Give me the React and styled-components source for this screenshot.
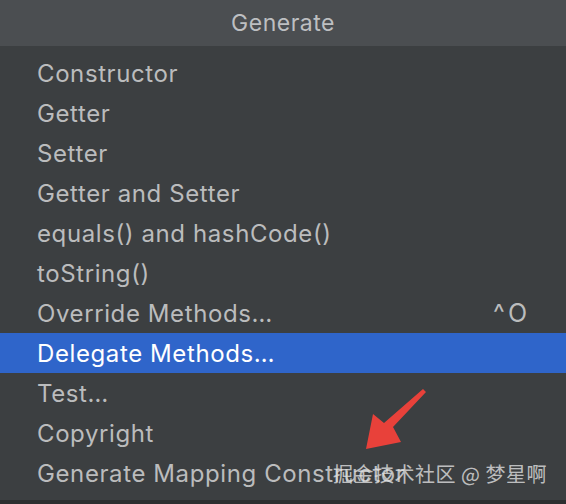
import React from 'react';
import styled, { createGlobalStyle } from 'styled-components';

const GlobalStyle = createGlobalStyle`
  html, body {
    margin: 0;
    padding: 0;
    background: #3c3f41;
  }
`;

const items = [
  { label: 'Constructor' },
  { label: 'Getter' },
  { label: 'Setter' },
  { label: 'Getter and Setter' },
  { label: 'equals() and hashCode()' },
  { label: 'toString()' },
  { label: 'Override Methods…', shortcut: ['^', 'O'] },
  { label: 'Delegate Methods…', active: true },
  { label: 'Test…' },
  { label: 'Copyright' },
  { label: 'Generate Mapping Constructor' },
];

const App = () => (
  <>
    <GlobalStyle />
    <Popup>
      <Header>Generate</Header>
      <List>
        {items.map((item) => (
          <Row key={item.label} active={item.active}>
            <span>{item.label}</span>
            {item.shortcut && (
              <Shortcut>
                {item.shortcut.map((k) => (
                  <span key={k}>{k}</span>
                ))}
              </Shortcut>
            )}
          </Row>
        ))}
      </List>
      <Arrow width="70" height="70" viewBox="0 0 70 70">
        <path d="M62 1 L65 4 L32 39 L40 54 L5 61 L12 26 L23 35 Z" fill="#e8413a" />
      </Arrow>
      <Watermark>掘金技术社区 @ 梦星啊</Watermark>
    </Popup>
  </>
);

const Popup = styled.div`
  position: relative;
  width: 566px;
  height: 504px;
  background: #3c3f41;
  font-family: Inter, "Noto Sans", sans-serif;
  overflow: hidden;
  border-bottom: 4px solid #2d2f30;
  box-sizing: border-box;
`;

const Header = styled.div`
  height: 46px;
  background: #4b4e51;
  color: #bdbfc1;
  font-size: 23px;
  letter-spacing: 0.5px;
  display: flex;
  align-items: center;
  justify-content: center;
`;

const List = styled.div`
  padding-top: 7px;
  display: flex;
  flex-direction: column;
`;

const Row = styled.div`
  height: 40px;
  display: flex;
  align-items: center;
  justify-content: space-between;
  padding: 0 39px 0 37px;
  font-size: 24px;
  letter-spacing: 0.6px;
  color: ${({ active }) => (active ? '#ffffff' : '#bbbcbd')};
  background: ${({ active }) => (active ? '#2f65ca' : 'transparent')};
`;

const Shortcut = styled.span`
  display: flex;
  gap: 3px;
  color: #bbbcbd;
  font-size: 25px;
  letter-spacing: 0;
`;

const Arrow = styled.svg`
  position: absolute;
  left: 361px;
  top: 388px;
`;

const Watermark = styled.div`
  position: absolute;
  left: 333px;
  top: 459px;
  font-family: "Noto Sans CJK SC", sans-serif;
  font-size: 20px;
  color: rgba(225, 225, 225, 0.8);
  letter-spacing: 0.5px;
`;

export default App;
